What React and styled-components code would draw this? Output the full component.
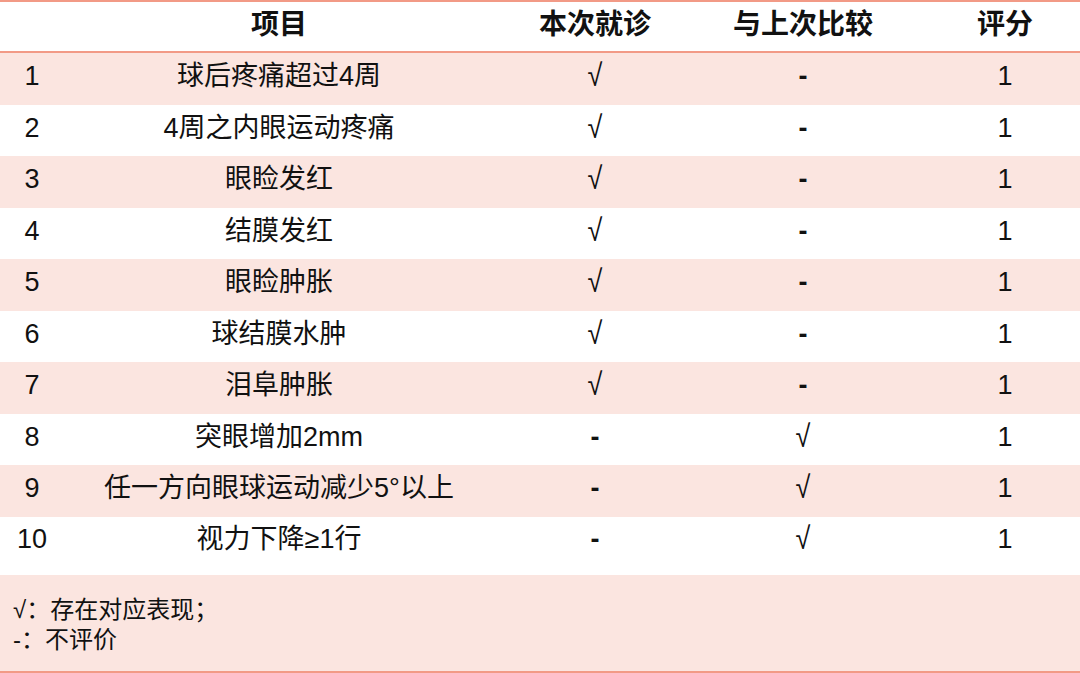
import styled, { createGlobalStyle } from "styled-components";

const GlobalStyle = createGlobalStyle`
  html, body {
    margin: 0;
    padding: 0;
    background: #ffffff;
  }
  body {
    font-family: "Liberation Sans", "Noto Sans CJK SC", sans-serif;
    color: #111111;
  }
`;

const rows = [
  { no: 1, item: "球后疼痛超过4周", now: "√", prev: "-", score: 1 },
  { no: 2, item: "4周之内眼运动疼痛", now: "√", prev: "-", score: 1 },
  { no: 3, item: "眼睑发红", now: "√", prev: "-", score: 1 },
  { no: 4, item: "结膜发红", now: "√", prev: "-", score: 1 },
  { no: 5, item: "眼睑肿胀", now: "√", prev: "-", score: 1 },
  { no: 6, item: "球结膜水肿", now: "√", prev: "-", score: 1 },
  { no: 7, item: "泪阜肿胀", now: "√", prev: "-", score: 1 },
  { no: 8, item: "突眼增加2mm", now: "-", prev: "√", score: 1 },
  { no: 9, item: "任一方向眼球运动减少5°以上", now: "-", prev: "√", score: 1 },
  { no: 10, item: "视力下降≥1行", now: "-", prev: "√", score: 1 },
];

const Table = styled.div`
  width: 1080px;
  height: 673px;
  box-sizing: border-box;
  border-top: 2px solid #f29a86;
  border-bottom: 2px solid #f29a86;
  display: flex;
  flex-direction: column;
`;

const Row = styled.div`
  display: grid;
  grid-template-columns: 64px 430px 202px 214px 170px;
  align-items: center;
  height: ${(p) => p.$h}px;
  background: ${(p) => (p.$pink ? "#fbe5e0" : "#ffffff")};
  padding-bottom: ${(p) => p.$pb || 0}px;
  box-sizing: border-box;
  font-size: 27px;
  line-height: 32px;
`;

const HeadRow = styled(Row)`
  border-bottom: 2px solid #f29a86;
  font-weight: bold;
  font-size: 28px;
`;

const Cell = styled.div`
  text-align: center;
  padding-left: ${(p) => p.$shift || 0}px;
  white-space: nowrap;
`;

const Mark = styled(Cell)`
  font-size: ${(p) => (p.$check ? "27px" : "27px")};
  font-weight: ${(p) => (p.$check ? 300 : 700)};
  transform: ${(p) => (p.$check ? "scaleY(1.15)" : "none")};
`;

const Footer = styled.div`
  flex: 1;
  background: #fbe5e0;
  padding: 20px 0 0 13px;
  font-size: 24px;
  line-height: 30px;
`;

export default function App() {
  return (
    <>
      <GlobalStyle />
      <Table>
        <HeadRow $h={51} $pb={4}>
          <Cell></Cell>
          <Cell>项目</Cell>
          <Cell>本次就诊</Cell>
          <Cell>与上次比较</Cell>
          <Cell $shift={20}>评分</Cell>
        </HeadRow>
        {rows.map((r, i) => (
          <Row
            key={r.no}
            $pink={i % 2 === 0}
            $h={r.no === 10 ? 58.5 : 51.5}
            $pb={r.no === 10 ? 13 : 5}
          >
            <Cell>{r.no}</Cell>
            <Cell>{r.item}</Cell>
            <Mark $check={r.now === "√"}>{r.now}</Mark>
            <Mark $check={r.prev === "√"}>{r.prev}</Mark>
            <Cell $shift={20}>{r.score}</Cell>
          </Row>
        ))}
        <Footer>
          <div>√：存在对应表现；</div>
          <div>-：不评价</div>
        </Footer>
      </Table>
    </>
  );
}
